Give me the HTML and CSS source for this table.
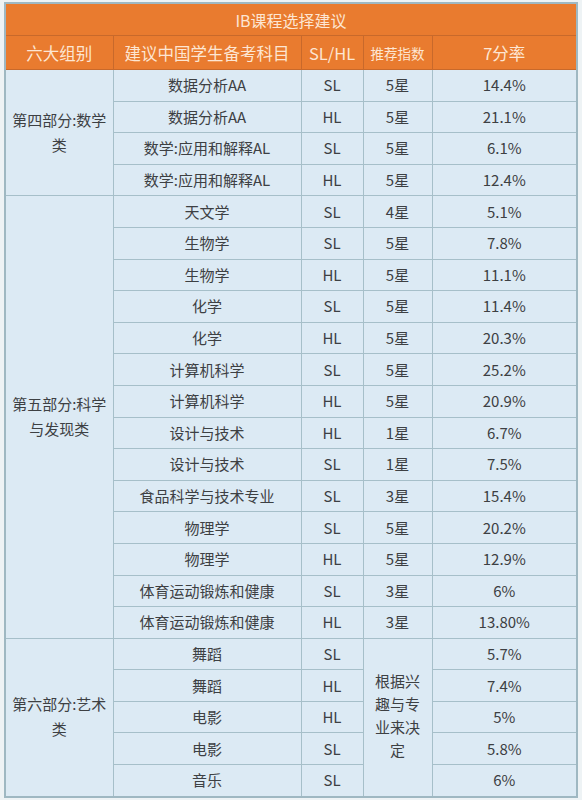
FILE: index.html
```html
<!DOCTYPE html>
<html lang="zh-CN">
<head>
  <meta charset="UTF-8" />
  <meta name="viewport" content="width=device-width, initial-scale=1.0"/>
  <title>IB课程选择建议</title>
  <link rel="stylesheet" href="styles.css">
</head>
<body>
  <table class="ib">
    <colgroup>
      <col class="c-group">
      <col class="c-subject">
      <col class="c-level">
      <col class="c-star">
      <col class="c-rate">
    </colgroup>
    <thead>
      <tr class="title">
        <th colspan="5">IB课程选择建议</th>
      </tr>
      <tr class="head">
        <th>六大组别</th>
        <th>建议中国学生备考科目</th>
        <th>SL/HL</th>
        <th class="small">推荐指数</th>
        <th>7分率</th>
      </tr>
    </thead>
    <tbody>
      <tr>
        <td rowspan="4" class="group">第四部分:数学<br>类</td>
        <td>数据分析AA</td><td>SL</td><td>5星</td><td>14.4%</td>
      </tr>
      <tr><td>数据分析AA</td><td>HL</td><td>5星</td><td>21.1%</td></tr>
      <tr><td>数学:应用和解释AL</td><td>SL</td><td>5星</td><td>6.1%</td></tr>
      <tr><td>数学:应用和解释AL</td><td>HL</td><td>5星</td><td>12.4%</td></tr>

      <tr>
        <td rowspan="14" class="group">第五部分:科学<br>与发现类</td>
        <td>天文学</td><td>SL</td><td>4星</td><td>5.1%</td>
      </tr>
      <tr><td>生物学</td><td>SL</td><td>5星</td><td>7.8%</td></tr>
      <tr><td>生物学</td><td>HL</td><td>5星</td><td>11.1%</td></tr>
      <tr><td>化学</td><td>SL</td><td>5星</td><td>11.4%</td></tr>
      <tr><td>化学</td><td>HL</td><td>5星</td><td>20.3%</td></tr>
      <tr><td>计算机科学</td><td>SL</td><td>5星</td><td>25.2%</td></tr>
      <tr><td>计算机科学</td><td>HL</td><td>5星</td><td>20.9%</td></tr>
      <tr><td>设计与技术</td><td>HL</td><td>1星</td><td>6.7%</td></tr>
      <tr><td>设计与技术</td><td>SL</td><td>1星</td><td>7.5%</td></tr>
      <tr><td>食品科学与技术专业</td><td>SL</td><td>3星</td><td>15.4%</td></tr>
      <tr><td>物理学</td><td>SL</td><td>5星</td><td>20.2%</td></tr>
      <tr><td>物理学</td><td>HL</td><td>5星</td><td>12.9%</td></tr>
      <tr><td>体育运动锻炼和健康</td><td>SL</td><td>3星</td><td>6%</td></tr>
      <tr><td>体育运动锻炼和健康</td><td>HL</td><td>3星</td><td>13.80%</td></tr>

      <tr>
        <td rowspan="5" class="group">第六部分:艺术<br>类</td>
        <td>舞蹈</td><td>SL</td>
        <td rowspan="5" class="note">根据兴<br>趣与专<br>业来决<br>定</td>
        <td>5.7%</td>
      </tr>
      <tr><td>舞蹈</td><td>HL</td><td>7.4%</td></tr>
      <tr><td>电影</td><td>HL</td><td>5%</td></tr>
      <tr><td>电影</td><td>SL</td><td>5.8%</td></tr>
      <tr><td>音乐</td><td>SL</td><td>6%</td></tr>
    </tbody>
  </table>
</body>
</html>
```

FILE: styles.css
```css
body {
  margin: 0;
  padding: 2px 6px 0 4px;
  background-color: #eef3f5;
  font-family: "Noto Sans CJK SC", "Noto Sans", sans-serif;
  color: #3d4043;
}

.ib {
  width: 572px;
  border-collapse: collapse;
  table-layout: fixed;
  border: 2px solid #9fb8c2;
  background-color: #dceaf4;
}

.c-group { width: 108px; }
.c-subject { width: 188px; }
.c-level { width: 62px; }
.c-star { width: 69px; }
.c-rate { width: 145px; }

th, td {
  padding: 0;
  text-align: center;
  vertical-align: middle;
  border: 1.5px solid #a6bfc9;
  white-space: nowrap;
}

thead th {
  background-color: #e97b2f;
  color: #fde6d3;
  font-weight: normal;
  border-color: #c8692b;
  line-height: 20px;
}

.title th {
  height: 31px;
  font-size: 16px;
  border-top: none;
}

.head th {
  height: 33px;
  font-size: 16.5px;
}

.head th.small {
  font-size: 13.5px;
}

tbody td {
  height: 30.6px;
  font-size: 15px;
  line-height: 20px;
}

td.group {
  line-height: 25px;
  padding-bottom: 2px;
}

td.note {
  line-height: 23px;
  padding-bottom: 4px;
}
```
